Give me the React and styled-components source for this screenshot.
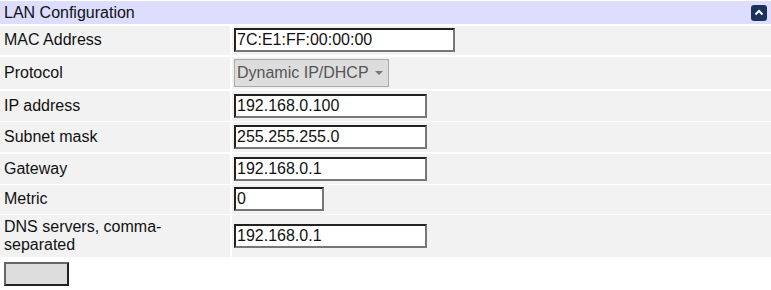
import styled, { createGlobalStyle } from "styled-components";

const GlobalStyle = createGlobalStyle`
  html, body {
    margin: 0;
    padding: 0;
    background: #fff;
    font-family: "Liberation Sans", Arial, sans-serif;
    font-size: 16px;
    color: #111;
  }
`;

const fields = [
  { label: "MAC Address", value: "7C:E1:FF:00:00:00", width: 221 },
  { label: "Protocol", select: "Dynamic IP/DHCP" },
  { label: "IP address", value: "192.168.0.100", width: 193 },
  { label: "Subnet mask", value: "255.255.255.0", width: 193 },
  { label: "Gateway", value: "192.168.0.1", width: 193 },
  { label: "Metric", value: "0", width: 90 },
  { label: "DNS servers, comma-separated", value: "192.168.0.1", width: 193 },
];

function App() {
  return (
    <>
      <GlobalStyle />
      <Panel>
        <Header>
          <span>LAN Configuration</span>
          <Collapse aria-label="collapse">
            <svg width="10" height="10" viewBox="0 0 10 10">
              <path d="M1.5 6.5 L5 3 L8.5 6.5" stroke="#fff" strokeWidth="2" fill="none" />
            </svg>
          </Collapse>
        </Header>
        {fields.map((f) => (
          <Row key={f.label}>
            <Label>{f.label}</Label>
            <Value>
              {f.select ? (
                <Select>
                  {f.select}
                  <Caret />
                </Select>
              ) : (
                <Input $w={f.width} defaultValue={f.value} />
              )}
            </Value>
          </Row>
        ))}
      </Panel>
      <Actions>
        <Button />
      </Actions>
    </>
  );
}

const Panel = styled.div`
  display: grid;
  grid-template-columns: 230px 1fr;
  grid-template-rows: 23px 29.5px 32.5px 30px 30px 30px 28.5px 42px;
  column-gap: 2px;
  row-gap: 1.5px;
  padding-top: 1px;
`;

const Header = styled.div`
  grid-column: 1 / -1;
  display: flex;
  align-items: center;
  justify-content: space-between;
  padding: 0 4px;
  background: #ddf;
`;

const Collapse = styled.div`
  width: 16px;
  height: 16px;
  border-radius: 3px;
  background: #1b325f;
  display: flex;
  align-items: center;
  justify-content: center;
`;

const Row = styled.div`
  display: contents;
`;

const Label = styled.div`
  background: #f2f2f2;
  padding: 0 4px;
  line-height: 18px;
  display: flex;
  align-items: center;
`;

const Value = styled.div`
  background: #f2f2f2;
  padding: 0 2px;
  display: flex;
  align-items: center;
`;

const Input = styled.input`
  box-sizing: border-box;
  width: ${({ $w }) => $w}px;
  height: 24px;
  margin: 0;
  padding: 1px 1px;
  font: inherit;
  font-size: 16px;
  color: #111;
  background: #fff;
  border: 2px solid;
  border-color: #222 #777 #777 #222;
  outline: none;
`;

const Select = styled.div`
  box-sizing: border-box;
  width: 155px;
  height: 28px;
  padding: 0 2px;
  display: flex;
  align-items: center;
  gap: 6px;
  background: #ddd;
  color: #555;
  border: 1px solid #aaa;
`;

const Caret = styled.span`
  width: 0;
  height: 0;
  border-left: 4px solid transparent;
  border-right: 4px solid transparent;
  border-top: 4px solid #777;
`;

const Actions = styled.div`
  padding: 5px 4px;
`;

const Button = styled.button`
  display: block;
  box-sizing: border-box;
  width: 65px;
  height: 24px;
  margin: 0;
  background: #ddd;
  border: 2px solid;
  border-color: #666 #222 #222 #666;
`;

export default App;
